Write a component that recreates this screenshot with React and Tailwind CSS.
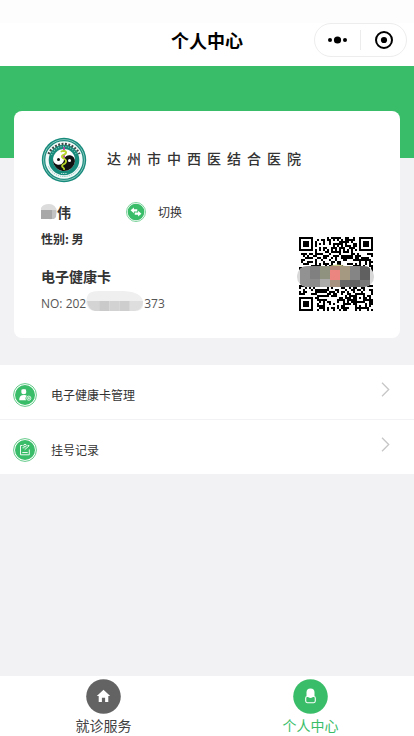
import React from "react";

const QR_SIZE = 37;

function finderModule(x, y) {
  const ring = Math.max(Math.abs(x - 3), Math.abs(y - 3));
  return ring === 3 || ring <= 1;
}

function dataModule(x, y) {
  let h = Math.imul(x + 11, 374761393) + Math.imul(y + 7, 668265263);
  h = Math.imul(h ^ (h >>> 13), 1274126177);
  return ((h ^ (h >>> 16)) & 1) === 1;
}

function buildQrPath() {
  const far = QR_SIZE - 8;
  let d = "";
  for (let y = 0; y < QR_SIZE; y++) {
    for (let x = 0; x < QR_SIZE; x++) {
      let on = dataModule(x, y);
      if (x < 8 && y < 8) on = x < 7 && y < 7 && finderModule(x, y);
      else if (x >= far && y < 8) on = x > far && y < 7 && finderModule(x - far - 1, y);
      else if (x < 8 && y >= far) on = x < 7 && y > far && finderModule(x, y - far - 1);
      else if (x === 6 || y === 6) on = (x + y) % 2 === 0;
      else if (Math.abs(x - 30) <= 2 && Math.abs(y - 30) <= 2)
        on = Math.max(Math.abs(x - 30), Math.abs(y - 30)) !== 1;
      if (on) d += `M${x} ${y}h1v1h-1z`;
    }
  }
  return d;
}

const QR_PATH = buildQrPath();

function QrCode() {
  return (
    <svg className="-mx-1 mb-[5px] h-[74px] w-[82px]" viewBox="-4 0 82 74" role="img" aria-label="健康卡二维码">
      <path d={QR_PATH} transform="scale(2)" fill="#000" shapeRendering="crispEdges" />
      <clipPath id="qr-mask">
        <rect x="-2" y="29" width="77" height="21" rx="10" />
      </clipPath>
      <path d="M31 29q7-3 15 0z" fill="#c8c886" />
      <g clipPath="url(#qr-mask)" shapeRendering="crispEdges">
        <rect x="-2" y="29" width="77" height="21" fill="#d8d8d8" />
        <rect x="1" y="29" width="10" height="21" fill="#929292" />
        <rect x="11" y="29" width="10" height="13" fill="#808080" />
        <rect x="11" y="42" width="10" height="8" fill="#8c8c8c" />
        <rect x="21" y="29" width="10" height="13" fill="#8f927f" />
        <rect x="21" y="42" width="10" height="8" fill="#aaaaa8" />
        <rect x="31" y="29" width="10" height="4" fill="#ae8577" />
        <rect x="31" y="33" width="10" height="10" fill="#ea8580" />
        <rect x="31" y="43" width="10" height="7" fill="#a7917f" />
        <rect x="41" y="29" width="10" height="14" fill="#a59981" />
        <rect x="41" y="43" width="10" height="7" fill="#666" />
        <rect x="51" y="29" width="10" height="14" fill="#858585" />
        <rect x="51" y="43" width="10" height="7" fill="#626262" />
        <rect x="61" y="29" width="10" height="14" fill="#606060" />
        <rect x="61" y="43" width="10" height="7" fill="#777" />
      </g>
    </svg>
  );
}

function HospitalLogo() {
  return (
    <svg className="size-[46px] shrink-0" viewBox="0 0 46 46" role="img" aria-label="医院标志">
      <circle cx="23" cy="23" r="22.2" fill="#168a7b" />
      <circle cx="23" cy="23" r="20.4" fill="none" stroke="#b9dfda" strokeWidth=".7" />
      <circle cx="23" cy="23" r="17" fill="none" stroke="#f4faf9" strokeWidth="3.4" />
      <path d="M7.500 17A17 17 0 0 1 38.500 17" fill="none" stroke="#3c4a47" strokeWidth="2.300" strokeDasharray="1.900 1.500" />
      <path d="M10.500 18a13.400 13.400 0 0 1 25 0" fill="none" stroke="#7cc0b6" strokeWidth="1.200" strokeDasharray="1 1.500" />
      <path d="M7.500 29.500A17 17 0 0 0 38.500 29.500" fill="none" stroke="#7fbfb6" strokeWidth="1" strokeDasharray="1.200 1" />
      <circle cx="23" cy="23" r="11" fill="#fff" />
      <path d="M34 23a11 11 0 0 1-22 0 5.500 5.500 0 0 0 11 0 5.500 5.500 0 0 1 11 0z" fill="#111" transform="rotate(8 23 23)" />
      <circle cx="17.500" cy="22.500" r="1.500" fill="#111" />
      <circle cx="28.500" cy="23.500" r="1.500" fill="#fff" />
      <path d="M23 10v5M23 17v4" stroke="#b8439c" strokeWidth="1.800" />
      <path d="M20 15c1-2 6-1 5 1s-5 2-4 4 5 2 4 5-4 2-4 4 3 1 2 4" fill="none" stroke="#b5d32a" strokeWidth="1.800" />
      <path d="M20 36.500h6" stroke="#a9d8d0" strokeWidth="1.200" strokeDasharray="1.200 .6" />
    </svg>
  );
}

function RingIcon({ className, children }) {
  return (
    <svg className={className} viewBox="0 0 24 24" aria-hidden="true">
      <circle cx="12" cy="12" r="11.400" fill="#fff" stroke="#3abd69" strokeWidth=".8" />
      <circle cx="12" cy="12" r="10" fill="#3abd69" />
      {children}
    </svg>
  );
}

function SwitchIcon() {
  return (
    <RingIcon className="size-5">
      <path d="M5.500 10l4-3.400v2.100h4v2.600h-4v2.200zM18.500 14l-4 3.400v-2.100h-4v-2.600h4v-2.200z" fill="#fff" />
    </RingIcon>
  );
}

function CardManageIcon() {
  return (
    <RingIcon className="size-6">
      <circle cx="10.800" cy="8.800" r="2.500" fill="#fff" />
      <path d="M8.600 6.500h4.400v1.600H8.600z" fill="#fff" />
      <path d="M6.200 17.300c-.1-3.500 1.600-5.300 4.700-5.300 1.500 0 2.300.3 3 .9-1.500.8-2 2.900-.7 4.400z" fill="#fff" />
      <circle cx="15.800" cy="15.200" r="2.100" fill="none" stroke="#fff" strokeWidth=".8" />
      <path d="M15.800 14v2.400M14.600 15.200H17" stroke="#fff" strokeWidth=".7" />
    </RingIcon>
  );
}

function RecordIcon() {
  return (
    <RingIcon className="size-6">
      <g fill="none" stroke="#fff" strokeWidth=".9">
        <path d="M9.500 7.500H7.500v9.300h8.800V11.500M14.500 7.500h1.800" />
        <circle cx="12" cy="7.600" r="1.300" />
        <path d="M9.300 14.500h5.400M11.700 11.700l4.300-3.800M9.500 9.800h2" />
      </g>
    </RingIcon>
  );
}

function NavHeader() {
  return (
    <header className="bg-white">
      <div className="h-[23px] bg-[#fdfdfd]" />
      <div className="grid h-[43px] grid-cols-[1fr_auto_1fr] items-start">
        <h1 className="col-start-2 pt-1 text-lg leading-[26px] font-bold text-black">个人中心</h1>
        <div className="mr-[7px] flex h-[34px] w-[93px] items-center justify-self-end rounded-full border border-[#ededed]">
          <button type="button" aria-label="更多" className="flex h-full flex-1 items-center justify-center">
            <svg className="h-2 w-5" viewBox="0 0 20 8">
              <circle cx="2" cy="4" r="2" />
              <circle cx="9.500" cy="4" r="3.600" />
              <circle cx="17" cy="4" r="2" />
            </svg>
          </button>
          <span className="h-5 w-px bg-[#ececec]" />
          <button type="button" aria-label="关闭" className="flex h-full flex-1 items-center justify-center">
            <svg className="size-[18px]" viewBox="0 0 18 18">
              <circle cx="9" cy="9" r="8" fill="none" stroke="#000" strokeWidth="2" />
              <circle cx="9" cy="9" r="3.100" />
            </svg>
          </button>
        </div>
      </div>
    </header>
  );
}

function HealthCard() {
  return (
    <section className="mx-3.5 -mt-[47px] rounded-lg bg-white px-[27px] pt-[26px] pb-[22px] text-[#333]">
      <div className="flex items-center gap-5">
        <HospitalLogo />
        <h2 className="pb-1 text-sm leading-5 font-medium tracking-[6px] whitespace-nowrap">达州市中西医结合医院</h2>
      </div>
      <div className="mt-[17px] flex items-center">
        <p className="flex w-[85px] items-center text-sm leading-6 font-bold">
          <svg className="h-[18px] w-4" viewBox="0 0 16 18" aria-hidden="true">
            <path d="M0 5q2-4 8-4 7 0 8 8l-1 5q-4 3-7 2H0z" fill="#dcdcdc" />
            <path d="M0 7h11v9H0z" fill="#a8a8a8" />
            <path d="M11 7h4v7l-2 2h-2z" fill="#c2c2c2" />
          </svg>
          伟
        </p>
        <button type="button" className="flex items-center gap-3 text-xs leading-6">
          <SwitchIcon />
          切换
        </button>
      </div>
      <div className="flex items-end justify-between">
        <div>
          <p className="mt-[3px] text-xs leading-6 font-bold">性别: 男</p>
          <p className="mt-[13px] text-sm leading-6 font-bold">电子健康卡</p>
          <p className="mt-1 flex h-6 items-center font-['Open_Sans','Noto_Sans_CJK_SC',sans-serif] text-xs text-[#555]">
            NO: 202
            <svg className="-mt-1.5 h-5 w-[58px]" viewBox="0 0 57 20" preserveAspectRatio="none" aria-hidden="true">
              <path d="M1 6Q2 0 12 0h25q18 1 19 11v4q-1 5-8 5H9q-7 0-9-8z" fill="#efefef" />
              <path d="M1 10h12v10H9q-7-1-8-10z" fill="#d4d4d4" />
              <path d="M13 10h10v10H13z" fill="#cacaca" />
              <path d="M23 10h10v10H23z" fill="#d2d2d2" />
              <path d="M33 10h10v10H33z" fill="#cecece" />
              <path d="M43 10h13q0 9-8 10h-5z" fill="#dedede" />
            </svg>
            373
          </p>
        </div>
        <QrCode />
      </div>
    </section>
  );
}

function MenuRow({ icon, label }) {
  return (
    <li className="bg-white">
      <a href="#" className="flex h-[54px] items-center pr-6 pl-[13px] text-xs text-[#333]">
        <span className="mt-1.5 flex items-center gap-3.5">
          {icon}
          {label}
        </span>
        <svg className="-mt-1.5 ml-auto h-[15px] w-[9px]" viewBox="0 0 9 15" aria-hidden="true">
          <path d="M1 .8l6.700 6.700L1 14.200" fill="none" stroke="#c6c6c6" strokeWidth="1.300" />
        </svg>
      </a>
    </li>
  );
}

function TabItem({ label, active, children }) {
  return (
    <a
      href="#"
      aria-current={active ? "page" : undefined}
      className={`flex flex-1 flex-col items-center pt-[3px] text-sm leading-[22px] ${active ? "text-[#3abd69]" : "text-[#404040]"}`}
    >
      <svg className="size-[35px] shrink-0" viewBox="0 0 35 35" aria-hidden="true">
        {children}
      </svg>
      {label}
    </a>
  );
}

export default function App() {
  return (
    <div className="flex min-h-screen flex-col bg-[#f2f2f5] font-['Noto_Sans_CJK_SC',sans-serif]">
      <NavHeader />
      <main className="flex-1">
        <div className="h-[92px] bg-[#3abd69]" />
        <HealthCard />
        <ul className="mt-[27px] flex flex-col gap-px">
          <MenuRow icon={<CardManageIcon />} label="电子健康卡管理" />
          <MenuRow icon={<RecordIcon />} label="挂号记录" />
        </ul>
      </main>
      <nav className="flex h-[60px] bg-white">
        <TabItem label="就诊服务">
          <circle cx="17.500" cy="17.500" r="17.300" fill="#636363" />
          <path d="M17.500 10.700l6.700 6.300h-1.900v6h-3.200v-4.300h-3.200V23h-3.200v-6h-1.900z" fill="#fff" />
        </TabItem>
        <TabItem label="个人中心" active>
          <circle cx="17.500" cy="17.500" r="17.300" fill="#3abd69" />
          <path d="M13.500 17.500v-4a4 4 0 0 1 8 0v4z" fill="#fff" />
          <rect x="12.700" y="17.500" width="9.600" height="6.200" rx="1.600" fill="#3abd69" stroke="#fff" strokeWidth="1.100" />
          <path d="M14.600 17h5.800q-.6 1.900-2.900 1.900T14.600 17z" fill="#fff" />
        </TabItem>
      </nav>
    </div>
  );
}
